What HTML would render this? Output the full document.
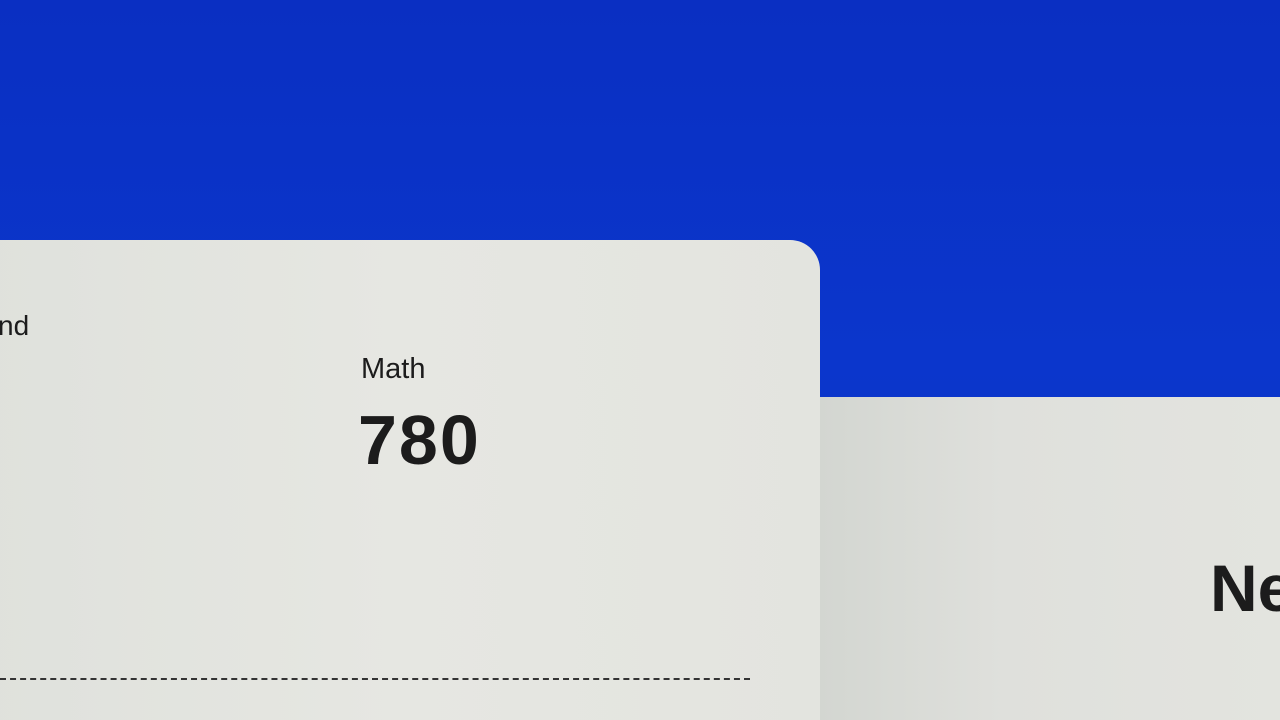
<!DOCTYPE html>
<html><head><style>
html,body{margin:0;padding:0;width:1280px;height:720px;overflow:hidden;}
body{position:relative;background:linear-gradient(180deg,#0a2fc2 0%,#0b36cc 50%,#0a30c0 100%);font-family:"Liberation Sans",sans-serif;color:#1c1c1c;}
.card{position:absolute;left:-20px;top:240px;width:840px;height:480px;background:linear-gradient(90deg,#dfe1dc 0%,#e6e7e2 50%,#e3e4df 100%);border-top-right-radius:30px;}
.right{position:absolute;left:820px;top:397px;width:460px;height:323px;background:linear-gradient(90deg,#d3d6d1 0%,#dfe0dc 40%,#e3e4df 100%);}
.t{position:absolute;white-space:nowrap;}
.dash{position:absolute;left:0;top:678px;width:750px;border-top:2px dashed #333;}
</style></head><body>
<div class="card"></div>
<div class="right"></div>
<div class="t" style="left:-2px;top:310px;font-size:28px;">nd</div>
<div class="t" style="left:361px;top:353px;font-size:29px;">Math</div>
<div class="t" style="left:358px;top:400px;font-size:70px;font-weight:bold;letter-spacing:2px;">780</div>
<div class="t" style="left:1210px;top:550px;font-size:66px;font-weight:bold;">Ne</div>
<div class="dash"></div>
</body></html>
